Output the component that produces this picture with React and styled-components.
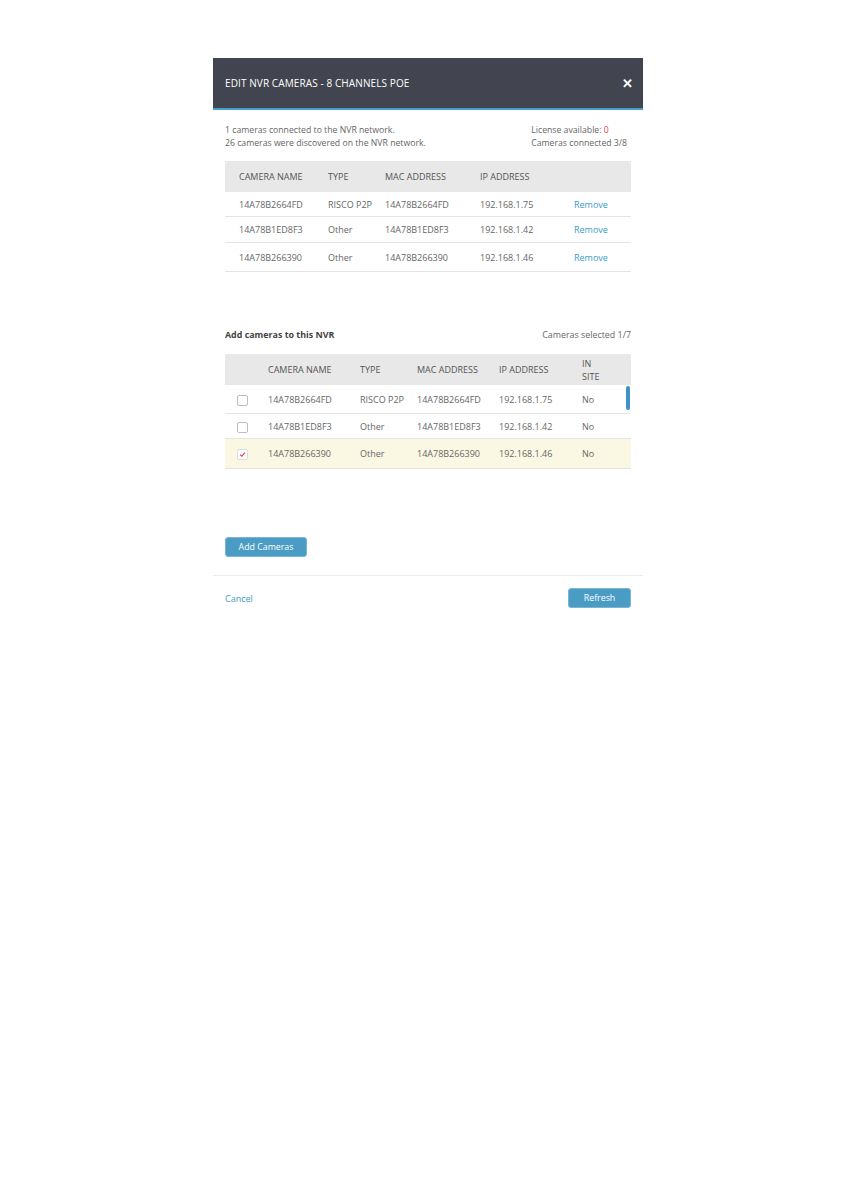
import styled, { createGlobalStyle } from 'styled-components'

const GlobalStyle = createGlobalStyle`
	body {
		margin: 0;
		background: #fff;
		font-family: "Open Sans", "Noto Sans", sans-serif;
		color: #666;
	}
`

const Page = styled.div`
	padding: 58px 0 0 213px;
`

const Modal = styled.div`
	width: 430px;
	background: #fff;
`

const Header = styled.div`
	height: 50px;
	background: #42454f;
	border-bottom: 2px solid #4a9fc9;
	display: flex;
	align-items: center;
	justify-content: space-between;
	padding: 0 10px 0 12px;
	color: #fff;
`

const Title = styled.h1`
	margin: 0;
	font-size: 10px;
	font-weight: 400;
	letter-spacing: 0.1px;
`

const Close = styled.span`
	font-size: 13px;
	font-weight: 700;
	line-height: 1;
`

const Body = styled.div`
	padding: 14px 12px 0;
`

const Info = styled.div`
	display: flex;
	justify-content: space-between;
	font-size: 8.7px;
	line-height: 13px;
	color: #666;
`

const Side = styled.div`
	padding-right: ${p => p.$pr || 0}px;
`

const Red = styled.span`
	color: #e8404a;
`

const Table = styled.div`
	position: relative;
	margin-top: ${p => p.$mt || 12}px;
	font-size: 9px;
	color: #666;
`

const Row = styled.div`
	display: grid;
	grid-template-columns: ${p => p.$cols};
	align-items: center;
	height: ${p => p.$h}px;
	background: ${p => p.$bg || '#fff'};
	border-bottom: ${p => p.$head ? 'none' : '1px solid #e4e4e4'};
	box-sizing: border-box;
`

const HeadRow = styled(Row)`
	background: #e8e8e8;
	color: #555;
	text-transform: uppercase;
	font-size: 9px;
	line-height: 13px;
`

const Link = styled.a`
	color: #3a9dc6;
	text-decoration: none;
	font-size: 9px;
`

const Box = styled.span`
	display: inline-block;
	width: 9px;
	height: 9px;
	border: 1px solid ${p => p.$on ? '#ddd' : '#bdbdbd'};
	border-radius: 2px;
	background: #fff;
	position: relative;
	vertical-align: middle;
`

const Check = styled.svg`
	position: absolute;
	left: 1px;
	top: 1px;
`

const Scroll = styled.div`
	position: absolute;
	right: 1px;
	top: 32px;
	width: 4px;
	height: 24px;
	border-radius: 2px;
	background: #3f93c2;
`

const SectionHead = styled.div`
	display: flex;
	justify-content: space-between;
	margin-top: 57px;
	font-size: 8.9px;
	line-height: 12px;
`

const Bold = styled.span`
	font-weight: 700;
	color: #444;
`

const Button = styled.button`
	display: block;
	font-family: "Open Sans", sans-serif;
	font-size: 8.8px;
	color: #fff;
	background: #4a9cc5;
	border: 1px solid #79b6d6;
	border-radius: 3px;
	height: 20px;
	width: ${p => p.$w}px;
	padding: 0;
`

const AddWrap = styled.div`
	padding: 68px 0 18px;
`

const Footer = styled.div`
	border-top: 1px solid #ececec;
	display: flex;
	justify-content: space-between;
	align-items: center;
	padding: 12px 12px 10px;
`

const cols1 = '14px 89px 57px 95px 94px 1fr'
const cols2 = '12px 31px 92px 57px 82px 83px 1fr'

const connected = [
	['14A78B2664FD', 'RISCO P2P', '14A78B2664FD', '192.168.1.75', 25],
	['14A78B1ED8F3', 'Other', '14A78B1ED8F3', '192.168.1.42', 26],
	['14A78B266390', 'Other', '14A78B266390', '192.168.1.46', 29],
]

const found = [
	['14A78B2664FD', 'RISCO P2P', '14A78B2664FD', '192.168.1.75', false, 29],
	['14A78B1ED8F3', 'Other', '14A78B1ED8F3', '192.168.1.42', false, 25],
	['14A78B266390', 'Other', '14A78B266390', '192.168.1.46', true, 30],
]

export default function App() {
	return (
		<Page>
			<GlobalStyle />
			<Modal>
				<Header>
					<Title>EDIT NVR CAMERAS - 8 CHANNELS POE</Title>
					<Close>✕</Close>
				</Header>
				<Body>
					<Info>
						<Side>
							<div>1 cameras connected to the NVR network.</div>
							<div>26 cameras were discovered on the NVR network.</div>
						</Side>
						<Side $pr={4}>
							<div>License available: <Red>0</Red></div>
							<div>Cameras connected 3/8</div>
						</Side>
					</Info>

					<Table $mt={11}>
						<HeadRow $cols={cols1} $h={31} $head>
							<span />
							<span>Camera name</span>
							<span>Type</span>
							<span>Mac address</span>
							<span>IP address</span>
							<span />
						</HeadRow>
						{connected.map((r, i) => (
							<Row key={i} $cols={cols1} $h={r[4]}>
								<span />
								<span>{r[0]}</span>
								<span>{r[1]}</span>
								<span>{r[2]}</span>
								<span>{r[3]}</span>
								<Link href="#">Remove</Link>
							</Row>
						))}
					</Table>

					<SectionHead>
						<Bold>Add cameras to this NVR</Bold>
						<span>Cameras selected 1/7</span>
					</SectionHead>

					<Table $mt={13}>
						<HeadRow $cols={cols2} $h={31} $head>
							<span />
							<span />
							<span>Camera name</span>
							<span>Type</span>
							<span>Mac address</span>
							<span>IP address</span>
							<span>In<br />site</span>
						</HeadRow>
						{found.map((r, i) => (
							<Row key={i} $cols={cols2} $h={r[5]} $bg={r[4] ? '#faf8e3' : '#fff'}>
								<span />
								<span>
									<Box $on={r[4]}>
										{r[4] && (
											<Check width="7" height="7" viewBox="0 0 7 7">
												<path d="M1 3.6 L2.8 5.2 L6 1.6" fill="none" stroke="#e0404a" strokeWidth="1.1" />
											</Check>
										)}
									</Box>
								</span>
								<span>{r[0]}</span>
								<span>{r[1]}</span>
								<span>{r[2]}</span>
								<span>{r[3]}</span>
								<span>No</span>
							</Row>
						))}
						<Scroll />
					</Table>

					<AddWrap>
						<Button $w={82}>Add Cameras</Button>
					</AddWrap>
				</Body>
				<Footer>
					<Link href="#">Cancel</Link>
					<Button $w={63}>Refresh</Button>
				</Footer>
			</Modal>
		</Page>
	)
}
